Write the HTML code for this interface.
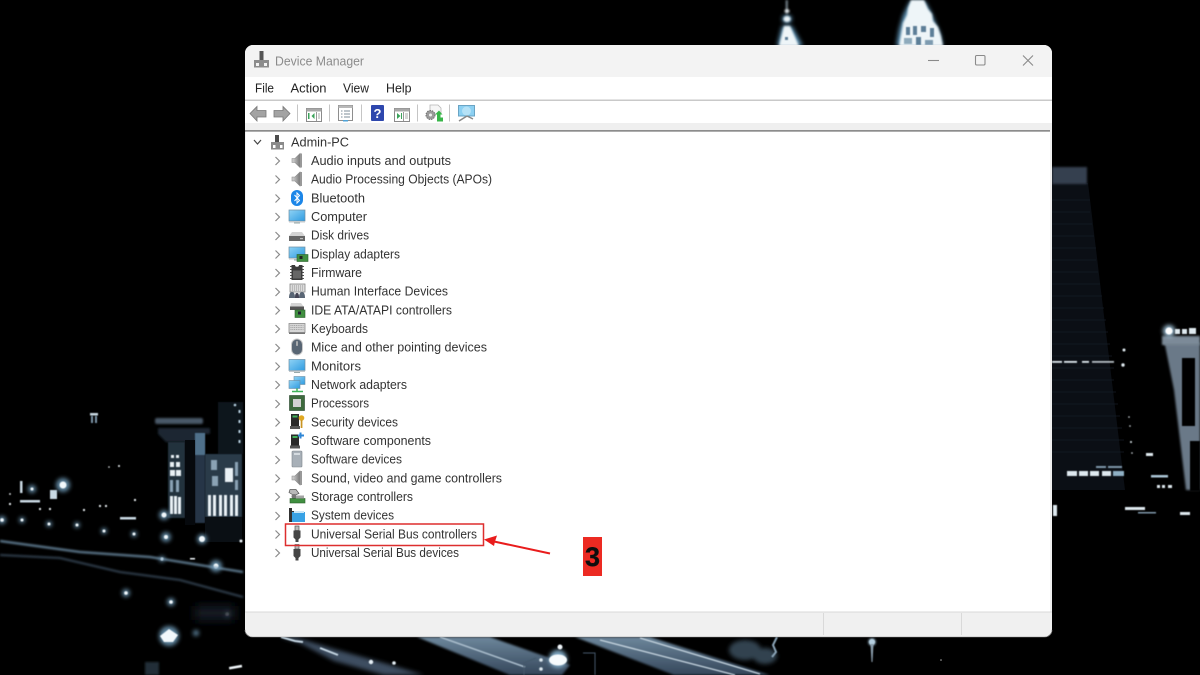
<!DOCTYPE html>
<html lang="en"><head><meta charset="utf-8"><title>Device Manager</title>
<style>
html,body{margin:0;padding:0;background:#000;width:1200px;height:675px;overflow:hidden}
svg{display:block;position:absolute;left:0;top:0}
text{font-family:"Liberation Sans",sans-serif}
</style></head><body>
<svg width="1200" height="675" viewBox="0 0 1200 675" xmlns="http://www.w3.org/2000/svg">
<defs>
<filter id="b0" x="-50%" y="-50%" width="200%" height="200%"><feGaussianBlur stdDeviation="0.6"/></filter>
<filter id="b1" x="-50%" y="-50%" width="200%" height="200%"><feGaussianBlur stdDeviation="1"/></filter>
<filter id="b2" x="-100%" y="-100%" width="300%" height="300%"><feGaussianBlur stdDeviation="2.2"/></filter>
<filter id="b4" x="-50%" y="-50%" width="200%" height="200%"><feGaussianBlur stdDeviation="5"/></filter>
<filter id="s" x="-5%" y="-20%" width="110%" height="140%"><feGaussianBlur stdDeviation="0.3"/></filter>
<filter id="w" x="-5%" y="-5%" width="110%" height="110%"><feGaussianBlur stdDeviation="0.35"/></filter>
<linearGradient id="scr" x1="0" y1="0" x2="1" y2="1"><stop offset="0" stop-color="#8fd3f5"/><stop offset="1" stop-color="#2f9be0"/></linearGradient>
<linearGradient id="spk" x1="0" y1="0" x2="1" y2="0"><stop offset="0" stop-color="#d8d8d8"/><stop offset="1" stop-color="#777"/></linearGradient>
<linearGradient id="roadA" x1="0" y1="0" x2="0" y2="1"><stop offset="0" stop-color="#6d879c"/><stop offset="1" stop-color="#34465a"/></linearGradient>
<symbol id="spkr" overflow="visible"><path d="M-5-2h3l5-5v14l-5-5h-3z" fill="url(#spk)" stroke="#8a8a8a" stroke-width=".6"/><path d="M3-7v14h2V-7z" fill="#999"/></symbol>
<symbol id="mon" overflow="visible"><rect x="-8" y="-6" width="16" height="11" fill="url(#scr)" stroke="#6c8ea4" stroke-width=".7"/><rect x="-8" y="5" width="16" height="1.500" fill="#c4c9cc"/><rect x="-3" y="6.500" width="6" height="1" fill="#9aa"/></symbol>
<symbol id="usb" overflow="visible"><rect x="-2" y="-8" width="4" height="4.500" fill="#bbb" stroke="#555" stroke-width=".7"/><path d="M-3.500-3.500h7v7l-2 2v2.500h-3V5.500l-2-2z" fill="#444"/></symbol>
</defs>

<rect width="1200" height="675" fill="#000"/>

<!-- background city -->
<g>
 <!-- top towers -->
 <g filter="url(#b2)" fill="#5c8fb0">
  <path d="M782 26h10l11 20h-26z"/>
  <ellipse cx="787" cy="19" rx="5" ry="4"/>
  <path d="M910 1h15l6 11 5 12 4 9 3 13h-47l3-17 4-14z"/>
 </g>
 <g filter="url(#b1)" fill="#eef5f8">
  <rect x="786" y="0" width="1.500" height="14" fill="#a9bcc8"/>
  <ellipse cx="787" cy="11" rx="2.500" ry="1.800"/>
  <ellipse cx="787" cy="19" rx="3.500" ry="3"/>
  <path d="M784 26h6l9 20h-20z"/>
  <path d="M911 0h13l4 9 4 5 1 7 5 6 3 9 2 10h-44l2-11 2-12 4-8 1-7z"/>
 </g>
 <g filter="url(#b0)" fill="#5d7f98"><rect x="906" y="27" width="4" height="8"/><rect x="913" y="26" width="4" height="9"/><rect x="921" y="26" width="5" height="6"/><rect x="930" y="28" width="4" height="9"/><rect x="904" y="38" width="8" height="6" fill="#8eaabc"/><rect x="916" y="37" width="5" height="8"/><rect x="925" y="40" width="8" height="5" fill="#7e9bb0"/><rect x="785" y="37" width="3" height="3"/></g>

 <!-- right tall tower -->
 <path d="M1052 183h36l37 307h-73z" fill="#0b0f15"/>
 <rect x="1052" y="167" width="35" height="17" fill="#343f50" filter="url(#b1)"/>
 <g stroke="#141b25" stroke-width="1" opacity=".8">
  <path d="M1052 200h38M1052 212h38M1052 224h40M1052 236h42M1052 248h44M1052 260h44M1052 272h46M1052 284h48M1052 296h50M1052 308h52M1052 320h54M1052 332h56M1052 344h58M1052 356h60M1052 368h62M1052 380h62M1052 392h64M1052 404h66M1052 416h68M1052 428h70M1052 440h72M1052 452h72"/>
 </g>
 <g filter="url(#b0)" fill="#dfe9ef">
  <rect x="1052" y="361" width="10" height="1.800"/><rect x="1064" y="361" width="13" height="1.800"/><rect x="1082" y="361" width="7" height="1.800"/><rect x="1092" y="361" width="22" height="1.800" opacity=".8"/>
  <rect x="1067" y="471" width="10" height="5"/><rect x="1079" y="471" width="9" height="5"/><rect x="1090" y="471" width="9" height="5"/><rect x="1102" y="471" width="9" height="5"/><rect x="1113" y="471" width="11" height="5" fill="#8fb0c4"/>
  <rect x="1096" y="466" width="10" height="2" fill="#7d95a8"/><rect x="1108" y="466" width="14" height="2" fill="#7d95a8"/>
  <circle cx="1124" cy="350" r="1.500"/><circle cx="1123" cy="365" r="1.700"/>
  <circle cx="1129" cy="417" r=".8"/><circle cx="1130" cy="426" r=".8"/><circle cx="1131" cy="442" r="1"/><circle cx="1132" cy="453" r=".8"/>
  <rect x="1146" y="453" width="7" height="3"/><rect x="1151" y="475" width="17" height="2.500" fill="#aac4d4"/>
  <rect x="1157" y="485" width="3" height="3"/><rect x="1162" y="485" width="3" height="3"/><rect x="1168" y="485" width="4" height="3"/>
  <rect x="1125" y="507" width="20" height="3"/><rect x="1138" y="512" width="18" height="1.500" fill="#7f98aa"/>
  <rect x="1180" y="512" width="10" height="3"/><rect x="1053" y="505" width="4" height="11"/>
 </g>
 <!-- right building -->
 <path d="M1163 343h37v147h-14l-3-25-9-75-9-45z" fill="#6a7988" filter="url(#b1)"/>
 <rect x="1162" y="336" width="38" height="9" fill="#7c8a98" filter="url(#b1)"/>
 <rect x="1182" y="358" width="13" height="68" fill="#030406" filter="url(#b0)"/>
 <rect x="1190" y="441" width="10" height="50" fill="#030406" filter="url(#b0)"/>
 <circle cx="1169" cy="331" r="6" fill="#9fc0d6" filter="url(#b2)"/><circle cx="1169" cy="331" r="3.500" fill="#fff" filter="url(#b0)"/>
 <g fill="#dfe9ef" filter="url(#b0)"><rect x="1175" y="329" width="5" height="5"/><rect x="1182" y="329" width="5" height="5"/><rect x="1189" y="328" width="7" height="6"/></g>

 <!-- left buildings -->
 <rect x="155" y="418" width="48" height="6" rx="2" fill="#4a5868" filter="url(#b1)"/>
 <path d="M158 428h52v6h-8v8h-36l-8-8z" fill="#1c2732" filter="url(#b1)"/>
 <rect x="218" y="402" width="25" height="52" fill="#11181f" filter="url(#b0)"/>
 <rect x="195" y="433" width="10" height="90" fill="#253646" filter="url(#b0)"/>
 <rect x="195" y="433" width="10" height="22" fill="#4f708a" filter="url(#b0)"/>
 <rect x="168" y="442" width="17" height="76" fill="#20303e" filter="url(#b0)"/>
 <rect x="185" y="440" width="10" height="85" fill="#06090d"/>
 <rect x="205" y="454" width="37" height="63" fill="#2b3a48" filter="url(#b0)"/>
 <rect x="205" y="517" width="37" height="25" fill="#0a0f14"/>
 <g fill="#e9f1f5" filter="url(#b0)">
  <rect x="171" y="455" width="3" height="3"/><rect x="176" y="455" width="3" height="3"/><rect x="170" y="462" width="4" height="5"/><rect x="176" y="462" width="4" height="5"/><rect x="170" y="470" width="5" height="6"/><rect x="176" y="470" width="5" height="6"/>
  <rect x="170" y="496" width="3" height="18"/><rect x="174" y="496" width="3" height="18"/><rect x="178" y="497" width="3" height="17"/>
  <rect x="208" y="495" width="3" height="21"/><rect x="213" y="495" width="3" height="21"/><rect x="219" y="495" width="3" height="21"/><rect x="224" y="495" width="3" height="21"/><rect x="230" y="495" width="3" height="21"/><rect x="235" y="495" width="3" height="21"/>
  <rect x="225" y="468" width="8" height="14"/>
 </g>
 <g fill="#8aa2b4" filter="url(#b0)"><rect x="211" y="460" width="6" height="10"/><rect x="212" y="476" width="6" height="10"/><rect x="235" y="462" width="3" height="14"/><rect x="235" y="480" width="3" height="10"/><rect x="170" y="480" width="3" height="12"/><rect x="176" y="480" width="3" height="12"/></g>
 <g fill="#b8d2e2" filter="url(#b0)"><circle cx="235" cy="405" r="1.300"/><rect x="238.500" y="410" width="2" height="3"/><rect x="238.500" y="420" width="2" height="3"/><rect x="238.500" y="430" width="2" height="3"/><rect x="238.500" y="440" width="2" height="3"/></g>
 <g fill="#c9d9e3" filter="url(#b0)">
  <rect x="90" y="413" width="8" height="2.500"/><rect x="91" y="416" width="2" height="7" fill="#7b94a8"/><rect x="95" y="416" width="2" height="7" fill="#7b94a8"/>
  <rect x="20" y="481" width="2.500" height="12"/><rect x="50" y="490" width="7" height="9"/><rect x="20" y="500" width="20" height="2.500"/><rect x="120" y="517" width="16" height="2.500"/>
 </g>
 <!-- left lights -->
 <g fill="#6f9cba" filter="url(#b2)" opacity=".85">
  <circle cx="63" cy="485" r="7"/><circle cx="32" cy="489" r="4"/><circle cx="2" cy="520" r="4"/><circle cx="22" cy="520" r="3"/>
  <circle cx="49" cy="524" r="3"/><circle cx="77" cy="525" r="3"/><circle cx="104" cy="531" r="3"/><circle cx="134" cy="534" r="3"/>
  <circle cx="164" cy="515" r="5"/><circle cx="166" cy="537" r="5"/><circle cx="202" cy="539" r="5"/><circle cx="162" cy="559" r="3"/>
  <circle cx="216" cy="566" r="6"/><circle cx="126" cy="593" r="4"/><circle cx="171" cy="602" r="4"/><circle cx="227" cy="614" r="3"/>
  <circle cx="169" cy="636" r="10"/><circle cx="196" cy="633" r="3"/>
 </g>
 <g fill="#f2f8fb" filter="url(#b0)">
  <circle cx="63" cy="485" r="3.500"/><circle cx="32" cy="489" r="1.500"/><circle cx="2" cy="520" r="1.800"/><circle cx="22" cy="520" r="1.500"/>
  <circle cx="49" cy="524" r="1.500"/><circle cx="77" cy="525" r="1.500"/><circle cx="104" cy="531" r="1.500"/><circle cx="134" cy="534" r="1.500"/>
  <circle cx="164" cy="515" r="2.500"/><circle cx="166" cy="537" r="2"/><circle cx="202" cy="539" r="3"/><circle cx="162" cy="559" r="1.500"/>
  <circle cx="216" cy="566" r="2.500"/><circle cx="126" cy="593" r="1.800"/><circle cx="171" cy="602" r="1.800"/><circle cx="227" cy="614" r="1.800"/>
  <circle cx="84" cy="510" r="1.100"/><circle cx="135" cy="500" r="1.100"/><circle cx="119" cy="466" r="1"/><circle cx="109" cy="467" r=".8"/>
  <circle cx="40" cy="509" r="1.100"/><circle cx="10" cy="494" r=".9"/><circle cx="10" cy="504" r="1.100"/><circle cx="50" cy="509" r="1.100"/>
  <circle cx="100" cy="506" r="1.100"/><circle cx="106" cy="506" r="1.100"/><circle cx="241" cy="541" r="1.500"/>
  <path d="M160 636l9-7 9 6-5 7h-9z"/>
  <rect x="190" y="558" width="5" height="1.500"/><rect x="229" y="666" width="13" height="2.500" transform="rotate(-10 235 667)"/>
 </g>
 <!-- left roads -->
 <path d="M0 541L80 552 150 557 243 572" fill="none" stroke="#7a9fba" stroke-width="1.800" filter="url(#b1)"/>
 <path d="M0 555L60 558 120 572 180 580 243 597" fill="none" stroke="#42566a" stroke-width="1.500" filter="url(#b1)"/>
 <rect x="195" y="606" width="40" height="14" fill="#141c25" filter="url(#b4)"/>
 <rect x="145" y="662" width="14" height="13" fill="#222d38" filter="url(#b1)"/>

 <!-- bottom rubble left -->
 <path d="M280 637h14l40 12 50 14 40 12h-40l-50-14-34-18z" fill="#3c4e60" filter="url(#b2)"/>
 <path d="M281 637l14 4 8 1M320 648l18 7" stroke="#c5d6e2" stroke-width="2" fill="none" filter="url(#b0)"/>
 <circle cx="371" cy="662" r="2.200" fill="#e5eff5" filter="url(#b0)"/><circle cx="394" cy="663" r="1.800" fill="#e5eff5" filter="url(#b0)"/>
 <!-- roads -->
 <path d="M417 637h73l80 28 -8 10h-52z" fill="url(#roadA)" filter="url(#b1)"/>
 <path d="M440 637l85 30" stroke="#a9bccb" stroke-width="1.600" filter="url(#b0)"/>
 <path d="M575 637h75l120 38h-96z" fill="url(#roadA)" filter="url(#b1)"/>
 <path d="M600 640l135 35M640 638l120 36" stroke="#c4d3de" stroke-width="1.400" filter="url(#b0)"/>
 <!-- trees -->
 <g fill="#33424f" filter="url(#b2)"><ellipse cx="745" cy="650" rx="16" ry="10"/><ellipse cx="765" cy="656" rx="12" ry="8"/></g>
 <path d="M777 637l-4 8 3 7-4 5" stroke="#8ba4b7" stroke-width="2" fill="none" filter="url(#b0)"/>
 <!-- centre light -->
 <circle cx="558" cy="659" r="9" fill="#7ea7c2" filter="url(#b2)"/>
 <ellipse cx="558" cy="660" rx="9" ry="5.500" fill="#f6fbfd" filter="url(#b0)"/>
 <circle cx="560" cy="647" r="2.500" fill="#f0f6fa" filter="url(#b0)"/>
 <circle cx="541" cy="660" r="1.800" fill="#dde9f0" filter="url(#b0)"/><circle cx="541" cy="669" r="1.800" fill="#dde9f0" filter="url(#b0)"/>
 <path d="M524 675v-12l12-5M595 675v-22l-12 0" stroke="#44586a" stroke-width="1" fill="none" filter="url(#b0)"/>
 <!-- pole -->
 <circle cx="872" cy="642" r="3" fill="#e6f0f6" filter="url(#b0)"/><circle cx="872" cy="642" r="4" fill="#9fbfd4" filter="url(#b1)" opacity=".7"/><path d="M870.500 644h3l-1 18h-1z" fill="#8a9dac" filter="url(#b0)"/>
 <circle cx="941" cy="660" r=".8" fill="#aaa"/>
</g>

<!-- window -->
<g filter="url(#w)">
 <rect x="245" y="45" width="807" height="592" rx="8" fill="#f0f0f0"/>
 <rect x="245" y="45" width="807" height="32" rx="8" fill="#f3f3f3"/>
 <rect x="245" y="70" width="807" height="7" fill="#f3f3f3"/>
 <rect x="245" y="77" width="807" height="23" fill="#fff"/>
 <rect x="245" y="99.500" width="807" height="1.500" fill="#c9c9c9"/>
 <rect x="245" y="101" width="807" height="22" fill="#fff"/>
 <rect x="245" y="123" width="807" height="7" fill="#efefef"/>
 <rect x="245" y="130" width="805" height="1.800" fill="#8c8c8c"/>
 <rect x="246" y="131.800" width="804" height="479.700" fill="#fff"/>
 <rect x="245" y="611.500" width="807" height="1" fill="#d8d8d8"/>
 <rect x="823" y="613" width="1" height="22" fill="#d9d9d9"/>
 <rect x="961" y="613" width="1" height="22" fill="#d9d9d9"/>
 <path d="M245 630v-0a7 7 0 0 0 7 7h793a7 7 0 0 0 7-7" fill="none" stroke="#8c8c8c" stroke-width=".6"/>

 <!-- title icon -->
 <rect x="254" y="60" width="15" height="7.500" fill="#8c8c8c"/><rect x="256" y="63" width="3" height="3" fill="#f3f3f3"/><rect x="264" y="63" width="3" height="3" fill="#f3f3f3"/><rect x="259.500" y="51" width="4" height="9" fill="#555"/>
 <text x="275" y="65.500" font-size="12.500" fill="#8b8b8b" textLength="89" lengthAdjust="spacingAndGlyphs">Device Manager</text>
 <!-- window controls -->
 <path d="M928 60.500h11" stroke="#8a8a8a" stroke-width="1.100"/>
 <rect x="975.500" y="55.500" width="9.500" height="9.500" rx="1.200" fill="none" stroke="#8a8a8a" stroke-width="1.100"/>
 <path d="M1023 55.500l10 10M1033 55.500l-10 10" stroke="#8a8a8a" stroke-width="1.100"/>
 <!-- menu -->
 <g font-size="12.500" fill="#222">
  <text x="255" y="92.500" textLength="19" lengthAdjust="spacingAndGlyphs">File</text>
  <text x="290.500" y="92.500" textLength="36" lengthAdjust="spacingAndGlyphs">Action</text>
  <text x="343" y="92.500" textLength="26" lengthAdjust="spacingAndGlyphs">View</text>
  <text x="386" y="92.500" textLength="25.500" lengthAdjust="spacingAndGlyphs">Help</text>
 </g>
 <!-- toolbar -->
 <path d="M250 113.500l7-7v4h9v6.500h-9v4z" fill="#a3a3a3" stroke="#777" stroke-width=".8"/>
 <path d="M290 113.500l-7-7v4h-9v6.500h9v4z" fill="#a3a3a3" stroke="#777" stroke-width=".8"/>
 <g fill="#c5c5c5"><rect x="297" y="104.500" width="1" height="17"/><rect x="329" y="104.500" width="1" height="17"/><rect x="361" y="104.500" width="1" height="17"/><rect x="417" y="104.500" width="1" height="17"/><rect x="449" y="104.500" width="1" height="17"/></g>
 <rect x="306.500" y="108.500" width="15" height="13" fill="#fff" stroke="#8a8a8a"/><rect x="306.500" y="108.500" width="15" height="3" fill="#a8a8a8"/><rect x="316" y="112" width="1" height="9" fill="#999"/><path d="M314.500 113v6l-3-3zM308 113h1.500v6H308z" fill="#3aa35a"/><path d="M318 114h2M318 116h2M318 118h2" stroke="#aaa"/>
 <rect x="338.500" y="105.500" width="14" height="15" fill="#fff" stroke="#8e8e8e"/><rect x="338.500" y="105.500" width="14" height="2.500" fill="#b9b9b9"/><path d="M341 111h1.500M344 111h6M341 114h1.500M344 114h6M341 117h1.500M344 117h6" stroke="#7c8c9a"/><rect x="343" y="120" width="5" height="1.500" fill="#4fa3d8"/>
 <rect x="371" y="105" width="13" height="16" rx="1" fill="#2f47ad"/><text x="377.500" y="118" font-size="13" font-weight="bold" fill="#fff" text-anchor="middle">?</text>
 <rect x="394.500" y="108.500" width="15" height="13" fill="#fff" stroke="#8a8a8a"/><rect x="394.500" y="108.500" width="15" height="3" fill="#a8a8a8"/><rect x="403" y="112" width="1" height="9" fill="#999"/><path d="M397 113v6l3.500-3zM401 113h1v6h-1z" fill="#3aa35a"/><path d="M405 114h3M405 116h3M405 118h3" stroke="#aaa"/>
 <path d="M430 105h8l3 3v6h-11z" fill="#f6f6f6" stroke="#b5b5b5" stroke-width=".8"/><circle cx="430.500" cy="115" r="4.500" fill="#9a9a9a" stroke="#6d6d6d" stroke-dasharray="1.500 1"/><circle cx="430.500" cy="115" r="1.500" fill="#eee"/><path d="M439 110.500l3.500 4h-2v3h2.500v4h-6v-4h0v-3h-2z" fill="#37b54a"/>
 <rect x="458.500" y="105.500" width="16" height="10.500" fill="#8cd0f2" stroke="#6aa4c4"/><circle cx="466.500" cy="111" r="4.500" fill="#bfe6f8" opacity=".8"/><path d="M459 121l8-5M467 116l6 3" stroke="#888" stroke-width="1.500"/>

 <!-- tree root -->
 <path d="M254 140l3.500 4 3.500-4" fill="none" stroke="#444" stroke-width="1.200"/>
 <rect x="275" y="135" width="4" height="8" fill="#4e4e4e"/><rect x="271" y="142" width="13" height="7.500" fill="#8a8a8a"/><rect x="273" y="145" width="2.500" height="3" fill="#fff"/><rect x="280" y="145" width="2.500" height="3" fill="#fff"/>
 <text x="291" y="146.500" font-size="12.500" fill="#333" textLength="58" lengthAdjust="spacingAndGlyphs">Admin-PC</text>

 <!-- chevrons -->
 <g fill="none" stroke="#8a8a8a" stroke-width="1.200">
  <path d="M275.500 157l4 4-4 4"/><path d="M275.500 175.500l4 4-4 4"/><path d="M275.500 194.500l4 4-4 4"/><path d="M275.500 213l4 4-4 4"/><path d="M275.500 232l4 4-4 4"/><path d="M275.500 250.500l4 4-4 4"/><path d="M275.500 269l4 4-4 4"/><path d="M275.500 288l4 4-4 4"/><path d="M275.500 306.500l4 4-4 4"/><path d="M275.500 325l4 4-4 4"/><path d="M275.500 344l4 4-4 4"/><path d="M275.500 362.500l4 4-4 4"/><path d="M275.500 381l4 4-4 4"/><path d="M275.500 400l4 4-4 4"/><path d="M275.500 418.500l4 4-4 4"/><path d="M275.500 437l4 4-4 4"/><path d="M275.500 456l4 4-4 4"/><path d="M275.500 474.500l4 4-4 4"/><path d="M275.500 493l4 4-4 4"/><path d="M275.500 512l4 4-4 4"/><path d="M275.500 530.500l4 4-4 4"/><path d="M275.500 549l4 4-4 4"/>
 </g>

 <!-- tree labels -->
 <g font-size="12.500" fill="#333">
  <text x="311" y="165" textLength="140" lengthAdjust="spacingAndGlyphs">Audio inputs and outputs</text>
  <text x="311" y="183.500" textLength="181" lengthAdjust="spacingAndGlyphs">Audio Processing Objects (APOs)</text>
  <text x="311" y="202.500" textLength="54" lengthAdjust="spacingAndGlyphs">Bluetooth</text>
  <text x="311" y="221" textLength="56" lengthAdjust="spacingAndGlyphs">Computer</text>
  <text x="311" y="239.500" textLength="58" lengthAdjust="spacingAndGlyphs">Disk drives</text>
  <text x="311" y="258.500" textLength="89" lengthAdjust="spacingAndGlyphs">Display adapters</text>
  <text x="311" y="277" textLength="51" lengthAdjust="spacingAndGlyphs">Firmware</text>
  <text x="311" y="295.500" textLength="137" lengthAdjust="spacingAndGlyphs">Human Interface Devices</text>
  <text x="311" y="314.500" textLength="141" lengthAdjust="spacingAndGlyphs">IDE ATA/ATAPI controllers</text>
  <text x="311" y="333" textLength="57" lengthAdjust="spacingAndGlyphs">Keyboards</text>
  <text x="311" y="351.500" textLength="176" lengthAdjust="spacingAndGlyphs">Mice and other pointing devices</text>
  <text x="311" y="370.500" textLength="50" lengthAdjust="spacingAndGlyphs">Monitors</text>
  <text x="311" y="389" textLength="96" lengthAdjust="spacingAndGlyphs">Network adapters</text>
  <text x="311" y="407.500" textLength="58" lengthAdjust="spacingAndGlyphs">Processors</text>
  <text x="311" y="426.500" textLength="87" lengthAdjust="spacingAndGlyphs">Security devices</text>
  <text x="311" y="445" textLength="120" lengthAdjust="spacingAndGlyphs">Software components</text>
  <text x="311" y="463.500" textLength="91" lengthAdjust="spacingAndGlyphs">Software devices</text>
  <text x="311" y="482.500" textLength="191" lengthAdjust="spacingAndGlyphs">Sound, video and game controllers</text>
  <text x="311" y="501" textLength="102" lengthAdjust="spacingAndGlyphs">Storage controllers</text>
  <text x="311" y="519.500" textLength="83" lengthAdjust="spacingAndGlyphs">System devices</text>
  <text x="311" y="538.500" textLength="166" lengthAdjust="spacingAndGlyphs">Universal Serial Bus controllers</text>
  <text x="311" y="557" textLength="148" lengthAdjust="spacingAndGlyphs">Universal Serial Bus devices</text>
 </g>

 <!-- tree icons -->
 <use href="#spkr" x="297" y="160.500"/>
 <use href="#spkr" x="297" y="179"/>
 <g transform="translate(297,198)"><rect x="-6" y="-8" width="12" height="16" rx="6" fill="#1a86e8"/><path d="M-2.500-3l5 5.500L0 5V-5l2.500 2.500-5 5.500" fill="none" stroke="#fff" stroke-width="1"/></g>
 <use href="#mon" x="297" y="216"/>
 <g transform="translate(297,235)"><path d="M-5-3h10l3 4h-16z" fill="#d4d4d4"/><rect x="-8" y="1" width="16" height="5" fill="#666"/><rect x="3" y="3" width="3" height="1.200" fill="#bbb"/></g>
 <use href="#mon" x="297" y="253"/>
 <g transform="translate(303,258.500)"><rect x="-6" y="-4" width="11" height="7" fill="#3f8f3f" stroke="#2b5f2b" stroke-width=".6"/><rect x="-3.500" y="-2.500" width="3" height="3" fill="#222"/></g>
 <g transform="translate(297,272.500)"><rect x="-5.500" y="-7.500" width="11" height="15" fill="#3b3b3b"/><path d="M-7-6h1.500M-7-3h1.500M-7 0h1.500M-7 3h1.500M-7 6h1.500M5.500-6H7M5.500-3H7M5.500 0H7M5.500 3H7M5.500 6H7" stroke="#555"/><path d="M-2-7.500a2 1.800 0 0 0 4 0z" fill="#fff"/><rect x="-4" y="-2" width="8" height="8" fill="#666"/></g>
 <g transform="translate(297,291)"><rect x="-7" y="-7" width="15" height="8" fill="#dcdcdc" stroke="#888" stroke-width=".8"/><path d="M-5-5h11M-5-3h11M-5-1h11" stroke="#999" stroke-dasharray="1 1"/><path d="M-8 7c0-4 1-6 3-6s3 2 3 6zM2 7c0-4 1-6 3-6s3 2 3 6z" fill="#5a6674"/><path d="M-2 7c0-4 .5-5 2-5s2 1 2 5z" fill="#445"/></g>
 <g transform="translate(297,310)"><path d="M-6-7h10l3 4H-7z" fill="#d5d5d5"/><rect x="-7" y="-3.500" width="14" height="3.500" fill="#555"/><rect x="-2" y="0" width="10" height="7.500" fill="#3f8f3f" stroke="#2b5f2b" stroke-width=".6"/><rect x="1" y="1.500" width="3" height="3" fill="#223"/></g>
 <g transform="translate(297,328.500)"><rect x="-8" y="-5" width="16" height="9" fill="#d6d6d6" stroke="#8c8c8c" stroke-width=".8"/><path d="M-6.500-3h13M-6.500-1h13M-6.500 1h13" stroke="#a2a2a2" stroke-dasharray="1 .8"/><rect x="-8" y="4" width="16" height="1.500" fill="#777"/></g>
 <g transform="translate(297,347)"><rect x="-5.500" y="-8" width="11" height="16" rx="5.500" fill="#596573" stroke="#c9c9c9"/><rect x="-.8" y="-6" width="1.600" height="5" rx=".8" fill="#bbb"/></g>
 <use href="#mon" x="297" y="365.500"/>
 <g transform="translate(297,384.500)"><rect x="-3" y="-8" width="11" height="8" fill="url(#scr)" stroke="#6c8ea4" stroke-width=".6"/><rect x="-8" y="-4" width="11" height="8" fill="url(#scr)" stroke="#6c8ea4" stroke-width=".6"/><path d="M-5 7h11M0 4v3" stroke="#41b35a" stroke-width="1.500"/></g>
 <g transform="translate(297,403)"><rect x="-7.500" y="-7.500" width="15" height="15" fill="#3e6b3c" stroke="#26422a" stroke-width=".6"/><rect x="-4" y="-4" width="8" height="8" fill="#d2d2d2"/></g>
 <g transform="translate(297,422)"><rect x="-6" y="-8" width="8" height="12" fill="#2c2c2c"/><rect x="-4.500" y="-6.500" width="5" height="2" fill="#43b35a"/><rect x="-7" y="4" width="10" height="3" fill="#555"/><circle cx="4.500" cy="-4" r="2.800" fill="#e0a824"/><rect x="3.700" y="-2" width="1.700" height="8" fill="#c99420"/></g>
 <g transform="translate(297,440.500)"><rect x="-6" y="-6" width="8" height="11" fill="#2c2c2c"/><rect x="-4.500" y="-4.500" width="5" height="2" fill="#43b35a"/><rect x="-7" y="5" width="10" height="3" fill="#555"/><path d="M3.500-8v6M1-5h6" stroke="#2e86d6" stroke-width="2"/></g>
 <g transform="translate(297,459)"><rect x="-5" y="-8" width="10" height="16" rx="1" fill="#a8b0b8" stroke="#7e858c" stroke-width=".6"/><rect x="-3" y="-6" width="6" height="2" fill="#d5dbe0"/></g>
 <use href="#spkr" x="297" y="478"/>
 <g transform="translate(297,496.500)"><path d="M-7-7h6l3 4-5 2-5-3z" fill="#b9b9b9" stroke="#555" stroke-width=".7"/><circle cx="-3" cy="0" r="2.500" fill="#777"/><rect x="-7" y="2" width="15" height="4.500" fill="#3f8f3f" stroke="#2b5f2b" stroke-width=".6"/><rect x="-1" y="-1" width="8" height="3" fill="#a5a5a5"/></g>
 <g transform="translate(297,515)"><path d="M-8-7h3v3h2v11h-5z" fill="#333"/><path d="M-5-3h13v10h-13z" fill="#37a2e5"/><rect x="-3" y="-4" width="10" height="2" fill="#c8e6f7"/></g>
 <use href="#usb" x="297" y="534"/>
 <use href="#usb" x="297" y="552.500"/>
</g>

<!-- annotation -->
<g filter="url(#s)">
 <rect x="285.500" y="524" width="198" height="21.500" fill="none" stroke="#dd2e2e" stroke-width="1.500"/>
 <path d="M550 553.500L494 541.500" stroke="#e91c1c" stroke-width="2"/>
 <path d="M484 539.500L497 535.500 495 541.500 494 546z" fill="#e91c1c"/>
 <rect x="583" y="537" width="19" height="39" fill="#ec2a24"/>
 <text x="592.500" y="566" font-size="27" font-weight="bold" fill="#111" stroke="#111" stroke-width=".4" text-anchor="middle">3</text>
</g>
</svg>
</body></html>
